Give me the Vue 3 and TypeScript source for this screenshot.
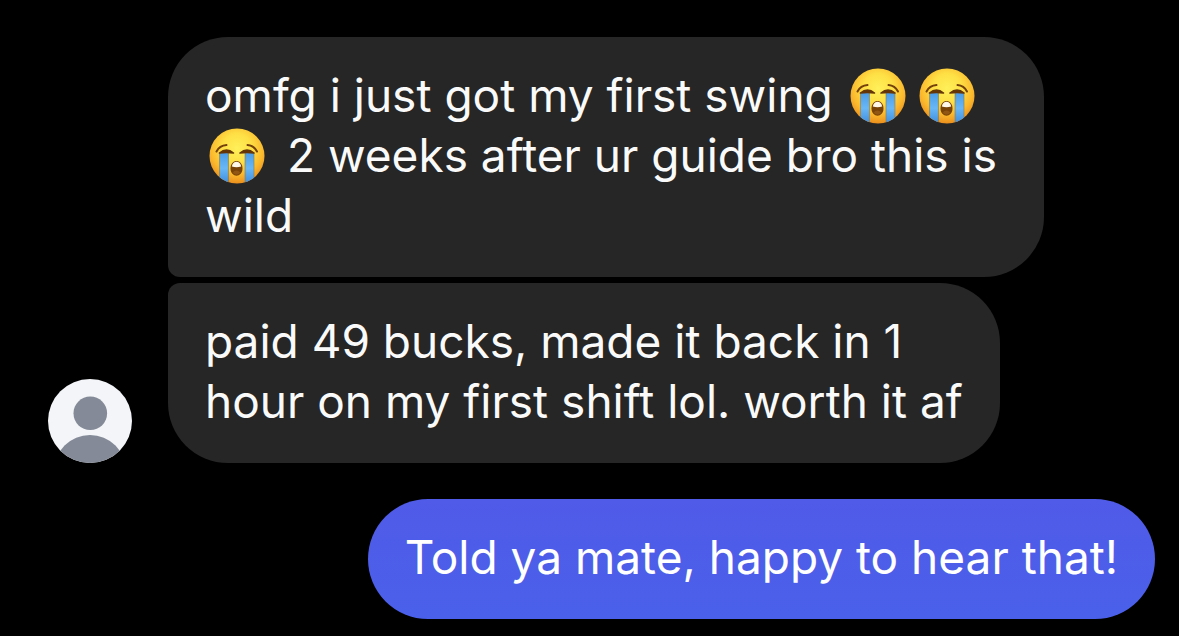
<script setup lang="ts">
import { defineComponent, h } from 'vue'

interface Bubble {
  lines: string[]
}

const incoming: Bubble[] = [
  { lines: ['omfg i just got my first swing 😭😭😭 2 weeks after ur guide bro this is wild'] },
  { lines: ['paid 49 bucks, made it back in 1', 'hour on my first shift lol. worth it af'] },
]
const outgoing: Bubble[] = [{ lines: ['Told ya mate, happy to hear that!'] }]

const tokens = (line: string): string[] => line.split(/(😭)/u).filter((part) => part !== '')

const CryingFace = defineComponent({
  render: () =>
    h('svg', { viewBox: '0 0 56 56', role: 'img', 'aria-label': '😭' }, [
      h('circle', { cx: 28, cy: 28, r: 27.5, fill: 'url(#face)' }),
      h('g', { 'clip-path': 'url(#face-clip)' }, [
        h('path', { d: 'M10.5 24.5H19.5V56H10.5Z M36 24.5H45V56H36Z', fill: 'url(#tear)', stroke: '#8b7a4a', 'stroke-width': 0.6 }),
      ]),
      h('path', {
        d: 'M7.5 23.5Q10.5 17.5 17.5 17 M38.5 17Q45 17.5 48 23.5',
        fill: 'none', stroke: '#74410b', 'stroke-width': 2, 'stroke-linecap': 'round',
      }),
      h('path', {
        d: 'M10.5 25Q17.5 19 24.5 25Q17.5 23.8 10.5 25Z M31 25Q38 19 45 25Q38 23.8 31 25Z',
        fill: '#653708', stroke: '#653708', 'stroke-width': 1.6, 'stroke-linejoin': 'round',
      }),
      h('path', { d: 'M21.5 40.5C21.5 30.5 33.5 30.5 33.5 40.5C33.5 50 21.5 50 21.5 40.5Z', fill: '#794307' }),
      h('path', { d: 'M22.8 38.5C23.5 32 31.5 32 32.2 38.5Q27.5 40 22.8 38.5Z', fill: '#fff7e8' }),
      h('path', { d: 'M23.5 44.5Q27.5 40.5 31.5 44.5Q27.5 49 23.5 44.5Z', fill: '#915613' }),
    ]),
})
</script>

<template>
  <main class="chat">
    <svg class="defs" aria-hidden="true">
      <defs>
        <radialGradient id="face" cx="0.5" cy="0.36" r="0.66">
          <stop offset="0" stop-color="#fff05a" />
          <stop offset="0.4" stop-color="#fee045" />
          <stop offset="0.72" stop-color="#fbb92e" />
          <stop offset="1" stop-color="#e98a1b" />
        </radialGradient>
        <linearGradient id="tear" x1="0" y1="0" x2="0" y2="1">
          <stop offset="0" stop-color="#4c9ce6" />
          <stop offset="0.5" stop-color="#69b7f5" />
          <stop offset="1" stop-color="#3e8bdc" />
        </linearGradient>
        <clipPath id="face-clip"><circle cx="28" cy="28" r="27.5" /></clipPath>
      </defs>
    </svg>

    <section class="group received">
      <svg class="avatar" viewBox="0 0 84 84" role="img" aria-label="Profile picture">
        <defs>
          <clipPath id="avatar-clip"><circle cx="42" cy="42" r="42" /></clipPath>
        </defs>
        <g clip-path="url(#avatar-clip)">
          <rect width="84" height="84" fill="#f3f5f8" />
          <circle cx="42.3" cy="34.3" r="16.8" fill="#848a97" />
          <circle cx="42" cy="92" r="36" fill="#848a97" />
        </g>
      </svg>
      <div class="stack">
        <p v-for="(bubble, i) in incoming" :key="i" class="bubble">
          <template v-for="(line, n) in bubble.lines" :key="n">
            <br v-if="n > 0" />
            <template v-for="(token, t) in tokens(line)" :key="t">
              <CryingFace v-if="token === '😭'" class="emoji" />
              <template v-else>{{ token }}</template>
            </template>
          </template>
        </p>
      </div>
    </section>

    <section class="group sent">
      <p v-for="(bubble, i) in outgoing" :key="i" class="bubble">{{ bubble.lines[0] }}</p>
    </section>
  </main>
</template>

<style>
body {
  margin: 0;
  background: #000;
}
</style>

<style scoped>
.chat {
  box-sizing: border-box;
  min-height: 100vh;
  display: flex;
  flex-direction: column;
  gap: 36px;
  padding: 37px 24px 17px 48px;
  background: #000;
  font-family: Inter, "Liberation Sans", sans-serif;
  font-size: 46px;
  line-height: 60px;
  color: #fafafa;
}

.defs {
  position: absolute;
  width: 0;
  height: 0;
}

.group {
  display: flex;
  align-items: flex-end;
  gap: 36px;
}

.avatar {
  flex: none;
  width: 84px;
  height: 84px;
}

.stack {
  display: flex;
  flex-direction: column;
  align-items: flex-start;
  gap: 6px;
  max-width: 876px;
}

.bubble {
  margin: 0;
  padding: 28px 37px 32px;
  border-radius: 60px;
  background: #262626;
}

.received .bubble:first-child {
  border-bottom-left-radius: 12px;
}

.received .bubble:last-child {
  border-top-left-radius: 12px;
}

.sent {
  justify-content: flex-end;
}

.sent .bubble {
  background: linear-gradient(#505be8, #4a60ea);
  color: #fff;
}

.emoji {
  width: 56px;
  height: 56px;
  margin: 0 9px 0 4px;
  vertical-align: -12px;
}
</style>
